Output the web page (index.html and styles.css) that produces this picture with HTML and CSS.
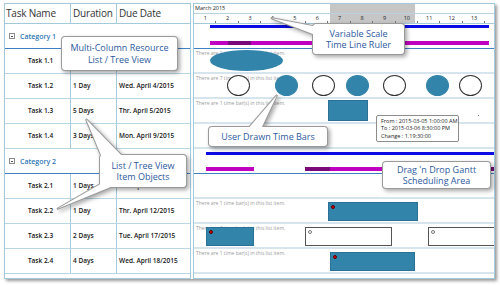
FILE: index.html
```html
<!DOCTYPE html>
<html>
<head>
<meta charset="utf-8">
<link rel="stylesheet" href="styles.css">
</head>
<body>
<div class="stage">
  <div class="frame">
    <div class="list">
      <div class="hdr"><div class="c1">Task Name</div><div class="c2">Duration</div><div class="c3">Due Date</div></div>
      <div class="cat"><span class="tog"></span>Category 1</div>
      <div class="row"><div class="c1">Task 1.1</div><div class="c2"></div><div class="c3"></div></div>
      <div class="row"><div class="c1">Task 1.2</div><div class="c2">1 Day</div><div class="c3">Wed. April 4/2015</div></div>
      <div class="row"><div class="c1">Task 1.3</div><div class="c2">5 Days</div><div class="c3">Thr. April 5/2015</div></div>
      <div class="row"><div class="c1">Task 1.4</div><div class="c2">3 Days</div><div class="c3">Mon. April 9/2015</div></div>
      <div class="cat"><span class="tog"></span>Category 2</div>
      <div class="row"><div class="c1">Task 2.1</div><div class="c2">1 Days</div><div class="c3">Thr. April 9/2015</div></div>
      <div class="row"><div class="c1">Task 2.2</div><div class="c2">1 Day</div><div class="c3">Thr. April 12/2015</div></div>
      <div class="row"><div class="c1">Task 2.3</div><div class="c2">2 Days</div><div class="c3">Tue. April 17/2015</div></div>
      <div class="row"><div class="c1">Task 2.4</div><div class="c2">4 Days</div><div class="c3">Wed. April 18/2015</div></div>
    </div>
    <div class="gantt">
      <div class="ruler">
        <div class="shade"></div>
        <div class="month">March 2015</div>
        <div class="days"><span>1</span><span>2</span><span>3</span><span>4</span><span>5</span><span>6</span><span>7</span><span>8</span><span>9</span><span>10</span><span>11</span><span>12</span><span>13</span><span></span></div>
      </div>
      <div class="grow gcat first">
        <div class="line blue" style="left:16px;width:279px"></div>
        <div class="line mag" style="left:16px;width:279px"></div>
        <div class="line mag dark" style="left:34px;width:23px"></div>
      </div>
      <div class="grow">
        <div class="note">There are 1 time bar(s) in this list item.</div>
        <div class="ell" style="left:16px;width:73px"></div>
      </div>
      <div class="grow">
        <div class="note">There are 7 time bar(s) in this list item.</div>
        <div class="circ" style="left:33px"></div>
        <div class="circ fill" style="left:81px"></div>
        <div class="circ" style="left:118px"></div>
        <div class="circ fill" style="left:152px"></div>
        <div class="circ" style="left:189px"></div>
        <div class="circ fill" style="left:232px"></div>
        <div class="circ" style="left:265px"></div>
      </div>
      <div class="grow">
        <div class="note">There are 1 time bar(s) in this list item.</div>
        <div class="bar tall" style="left:134px;width:40px"></div>
      </div>
      <div class="grow"></div>
      <div class="grow gcat second">
        <div class="line blue" style="left:12px;width:288px"></div>
        <div class="line mag" style="left:12px;width:48px"></div>
        <div class="line mag" style="left:111px;width:189px"></div>
        <div class="line mag dark" style="left:111px;width:25px"></div>
        <div class="line mag dark" style="left:294px;width:6px"></div>
      </div>
      <div class="grow"></div>
      <div class="grow">
        <div class="note">There are 1 time bar(s) in this list item.</div>
        <div class="bar" style="left:134px;width:90px"><span class="dot"></span></div>
      </div>
      <div class="grow">
        <div class="note">There are 3 time bar(s) in this list item.</div>
        <div class="bar" style="left:12px;width:48px"><span class="dot"></span></div>
        <div class="obar" style="left:111px;width:87px"><span class="hole"></span></div>
        <div class="obar" style="left:234px;width:70px"><span class="hole"></span></div>
      </div>
      <div class="grow">
        <div class="note">There are 1 time bar(s) in this list item.</div>
        <div class="bar" style="left:136px;width:85px"><span class="dot"></span></div>
      </div>
    </div>
  </div>

  <div class="tip">From : 2015-03-05 1:00:00 AM<br>To : 2015-03-06 8:30:00 PM<br>Change : 1.19:30:00</div>
  <span class="speck"></span>

  <svg class="callouts" width="500" height="285" viewBox="0 0 500 285">
    <g fill="#ffffff" stroke="#9a9a9a" stroke-width="2">
      <rect x="62" y="37" width="115" height="33" rx="3"/>
      <rect x="100" y="155" width="86" height="32" rx="3"/>
      <polygon points="86,119 103,160 126,160"/>
      <polygon points="57,209 104,182 118,184"/>
      <rect x="313" y="24" width="91" height="30" rx="3"/>
      <polygon points="271,18 318,27 318,36"/>
      <rect x="209" y="127" width="118" height="19" rx="3"/>
      <polygon points="277,95 246,131 260,131"/>
      <rect x="383" y="162" width="107" height="26" rx="3"/>
    </g>
    <g fill="#ffffff">
      <rect x="62" y="37" width="115" height="33" rx="3"/>
      <rect x="100" y="155" width="86" height="32" rx="3"/>
      <polygon points="86,119 103,160 126,160"/>
      <polygon points="57,209 104,182 118,184"/>
      <rect x="313" y="24" width="91" height="30" rx="3"/>
      <polygon points="271,18 318,27 318,36"/>
      <rect x="209" y="127" width="118" height="19" rx="3"/>
      <polygon points="277,95 246,131 260,131"/>
      <rect x="383" y="162" width="107" height="26" rx="3"/>
    </g>
  </svg>

  <div class="ctext k1">Multi-Column Resource<br>List / Tree View</div>
  <div class="ctext k2">List / Tree View<br>Item Objects</div>
  <div class="ctext k3">Variable Scale<br>Time Line Ruler</div>
  <div class="ctext k4">User Drawn Time Bars</div>
  <div class="ctext k5">Drag 'n Drop Gantt<br>Scheduling Area</div>
</div>
</body>
</html>
```

FILE: styles.css
```css
* { box-sizing: border-box; margin: 0; padding: 0; }
body { margin: 0; background: #fff; font-family: "Open Sans", "Noto Sans", sans-serif; }
.stage { position: relative; width: 500px; height: 285px; overflow: hidden; background: #fff; }

.frame {
  display: flex; gap: 2px;
  margin: 3px 0 0 4px;
  width: 491px; height: 276px;
  background: #fff;
  box-shadow: 2px 2px 3px rgba(0,0,0,0.4);
}

/* list */
.list { width: 187px; height: 276px; border: 1px solid #a3c9dc; }
.hdr { display: flex; height: 20px; border-bottom: 1px solid #a3c9dc; }
.hdr > div { font-size: 10px; letter-spacing: -0.2px; line-height: 19px; color: #333; white-space: nowrap; overflow: hidden; }
.row { display: flex; height: 25px; border-bottom: 1px solid #b9d6e4; }
.c1 { width: 66px; border-right: 1px solid #a3c9dc; }
.c2 { width: 46px; border-right: 1px solid #a3c9dc; }
.c3 { flex: 1; }
.hdr .c1 { padding-left: 1px; }
.hdr .c2, .hdr .c3 { padding-left: 2px; }
.row > div { font-size: 6.5px; font-weight: 600; line-height: 24px; color: #151515; white-space: nowrap; }
.row .c1 { text-align: center; padding-left: 6px; }
.row .c2, .row .c3 { padding-left: 2px; }
.cat {
  height: 25px; border-bottom: 1px solid #3f7fc4;
  display: flex; align-items: center; gap: 5px; padding-left: 4px;
  font-size: 7px; font-weight: 600; color: #2e78b5;
}
.tog { position: relative; width: 6px; height: 6px; border: 1px solid #8a8a8a; }
.tog::after { content: ""; position: absolute; left: 1px; top: 1.5px; width: 2px; height: 1px; background: #555; }

/* gantt */
.gantt { width: 302px; height: 276px; border: 1px solid #a3c9dc; overflow: hidden; }
.ruler { position: relative; height: 20px; border-bottom: 1px solid #a3c9dc; }
.shade { position: absolute; left: 136px; top: 0; width: 85px; height: 19px; background: #c6c6c6; }
.month { position: relative; height: 10px; border-bottom: 1px solid #b9d3e0; font-size: 5.5px; line-height: 9px; padding-left: 1px; color: #222; }
.days { position: relative; display: flex; height: 9px; }
.days span { position: relative; flex: 0 0 22.42px; text-align: center; font-size: 5.5px; line-height: 8px; color: #222; }
.days span::after { content: ""; position: absolute; right: 0; bottom: 0; width: 1px; height: 2px; background: #777; }

.grow { position: relative; height: 25px; border-bottom: 2px solid #d6e4ed; }
.gcat { border-bottom: 1px solid #3f7fc4; }
.note { position: absolute; left: 2px; top: 1px; font-size: 5px; line-height: 6px; color: #9c9c9c; white-space: nowrap; }
.line { position: absolute; height: 3px; }
.blue { background: #0c0ce2; }
.first .blue { top: 1px; }
.second .blue { top: 3px; }
.mag { background: #c000c0; height: 4px; }
.first .mag { top: 17px; }
.second .mag { top: 18px; }
.mag.dark { background: #7a0a7a; }

.ell { position: absolute; top: 1px; height: 21px; border-radius: 50%; background: #3384aa; }
.circ { position: absolute; top: 1px; width: 23px; height: 21px; border-radius: 50%; border: 1px solid #333; background: #fff; }
.circ.fill { background: #3384aa; border-color: #3384aa; }
.bar { position: absolute; top: 3px; height: 19px; background: #3384aa; border: 1px solid #2b7196; }
.bar.tall { top: 1px; height: 21px; }
.dot { position: absolute; left: 2px; top: 2px; width: 4px; height: 4px; border-radius: 50%; background: #e00000; border: 0.5px solid #500; }
.obar { position: absolute; top: 3px; height: 19px; border: 1.5px solid #555; background: #fff; }
.hole { position: absolute; left: 2px; top: 2px; width: 4px; height: 4px; border: 1px solid #777; border-radius: 50%; }

.tip {
  position: absolute; left: 376px; top: 115px; width: 83px; height: 27px;
  border: 1px solid #8c8c8c; border-radius: 2px; background: #fff;
  padding: 2px 0 0 4px; font-size: 5.5px; line-height: 7.3px; color: #222; white-space: nowrap;
}
.speck { position: absolute; left: 478px; top: 115px; width: 1px; height: 1px; background: #777; }

.callouts { position: absolute; left: 0; top: 0; filter: drop-shadow(2px 2px 2px rgba(0,0,0,0.35)); }
.ctext {
  position: absolute; display: flex; align-items: center; justify-content: center; text-align: center;
  color: #2d5a9e; font-size: 9px; line-height: 11.5px; white-space: nowrap;
}
.k1 { left: 62px; top: 37px; width: 115px; height: 33px; }
.k2 { left: 100px; top: 155px; width: 86px; height: 32px; }
.k3 { left: 313px; top: 24px; width: 91px; height: 30px; }
.k4 { left: 209px; top: 127px; width: 118px; height: 19px; }
.k5 { left: 383px; top: 162px; width: 107px; height: 26px; }
```
